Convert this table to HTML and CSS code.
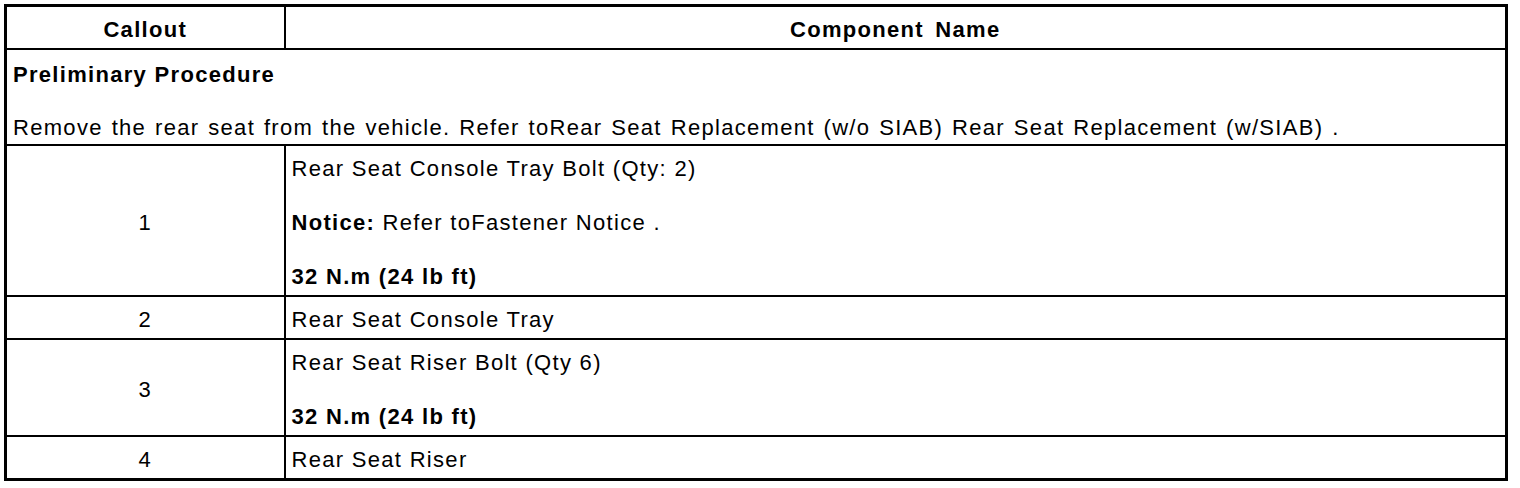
FILE: index.html
```html
<!DOCTYPE html>
<html>
<head>
<meta charset="utf-8">
<link rel="stylesheet" href="styles.css">
</head>
<body>
<table class="spec">
  <colgroup>
    <col class="col-callout">
    <col class="col-name">
  </colgroup>
  <thead>
    <tr>
      <th>Callout</th>
      <th>Component Name</th>
    </tr>
  </thead>
  <tbody>
    <tr>
      <td colspan="2" class="pre">
        <p class="b">Preliminary Procedure</p>
        <p class="wide">Remove the rear seat from the vehicle. Refer toRear Seat Replacement (w/o SIAB) Rear Seat Replacement (w/SIAB) .</p>
      </td>
    </tr>
    <tr>
      <td class="num">1</td>
      <td>
        <p>Rear Seat Console Tray Bolt (Qty: 2)</p>
        <p><span class="b">Notice:</span> Refer toFastener Notice .</p>
        <p class="b">32 N.m (24 lb ft)</p>
      </td>
    </tr>
    <tr>
      <td class="num">2</td>
      <td><p>Rear Seat Console Tray</p></td>
    </tr>
    <tr>
      <td class="num">3</td>
      <td>
        <p>Rear Seat Riser Bolt (Qty 6)</p>
        <p class="b">32 N.m (24 lb ft)</p>
      </td>
    </tr>
    <tr>
      <td class="num">4</td>
      <td><p>Rear Seat Riser</p></td>
    </tr>
  </tbody>
</table>
</body>
</html>
```
FILE: styles.css
```css
html, body {
  margin: 0;
  padding: 0;
  background: #fff;
}
body {
  padding: 4px;
  font-family: "Liberation Sans", Arial, sans-serif;
  font-size: 22px;
  letter-spacing: 1.3px;
  color: #000;
}
.spec {
  width: 1504px;
  border-collapse: collapse;
  border: 3px solid #000;
  table-layout: fixed;
}
.col-callout { width: 279px; }
.spec th, .spec td {
  border: 2px solid #000;
  padding: 11px 6px 6px 6px;
  vertical-align: middle;
  line-height: 24px;
}
.spec th {
  font-weight: bold;
  text-align: center;
}
.spec th + th {
  word-spacing: 4px;
}
.spec td.num {
  text-align: center;
}
.spec td {
  text-align: left;
}
.spec td.pre {
  padding-top: 13px;
  padding-bottom: 4px;
}
.spec p {
  margin: 30px 0 0 0;
}
.spec p:first-child {
  margin-top: 0;
}
.spec p.wide {
  margin-top: 29px;
  word-spacing: 1.5px;
}
.b {
  font-weight: bold;
}
```
